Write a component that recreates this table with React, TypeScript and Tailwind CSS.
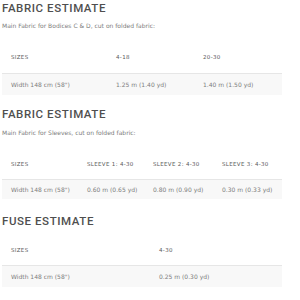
import React from "react";

interface EstimateTableProps {
  columns: { label: string; width: string }[];
  values: string[];
  headHeight: string;
  rowHeight: string;
}

const EstimateTable: React.FC<EstimateTableProps> = ({ columns, values, headHeight, rowHeight }) => {
  return (
    <table className="w-[280px] border-collapse table-fixed">
      <thead>
        <tr className={`${headHeight} border-b border-[#e6e6e6]`}>
          {columns.map((col) => (
            <th
              key={col.label}
              className={`${col.width} pl-[9px] text-left align-middle text-[5.5px] font-normal tracking-[0.06em] text-[#5a5a5a]`}
            >
              {col.label}
            </th>
          ))}
        </tr>
      </thead>
      <tbody>
        <tr className={`${rowHeight} bg-[#f8f8f8]`}>
          {values.map((value, i) => (
            <td key={i} className="pl-[9px] align-middle text-[6px] text-[#7d7d7d]">
              {value}
            </td>
          ))}
        </tr>
      </tbody>
    </table>
  );
};

const headingClass =
  "h-[16px] leading-[16px] text-[11.5px] font-medium tracking-[0.05em] text-[#4f4f4f] font-['Roboto',sans-serif]";

const App: React.FC = () => {
  return (
    <div className="w-[300px] h-[300px] bg-white pl-[2px] font-['DejaVu_Sans',sans-serif] overflow-hidden">
      <h2 className={headingClass}>FABRIC ESTIMATE</h2>
      <p className="mt-[6px] h-[8px] leading-[8px] text-[6px] text-[#7d7d7d]">
        Main Fabric for Bodices C &amp; D, cut on folded fabric:
      </p>
      <div className="mt-[11px]">
        <EstimateTable
          headHeight="h-[32px]"
          rowHeight="h-[22px]"
          columns={[
            { label: "SIZES", width: "w-[105px]" },
            { label: "4-18", width: "w-[87px]" },
            { label: "20-30", width: "w-[88px]" },
          ]}
          values={["Width 148 cm (58\")", "1.25 m (1.40 yd)", "1.40 m (1.50 yd)"]}
        />
      </div>

      <h2 className={`mt-[11px] ${headingClass}`}>FABRIC ESTIMATE</h2>
      <p className="mt-[7px] h-[8px] leading-[8px] text-[6px] text-[#7d7d7d]">
        Main Fabric for Sleeves, cut on folded fabric:
      </p>
      <div className="mt-[12px]">
        <EstimateTable
          headHeight="h-[30px]"
          rowHeight="h-[20px]"
          columns={[
            { label: "SIZES", width: "w-[76px]" },
            { label: "SLEEVE 1: 4-30", width: "w-[66px]" },
            { label: "SLEEVE 2: 4-30", width: "w-[69px]" },
            { label: "SLEEVE 3: 4-30", width: "w-[69px]" },
          ]}
          values={["Width 148 cm (58\")", "0.60 m (0.65 yd)", "0.80 m (0.90 yd)", "0.30 m (0.33 yd)"]}
        />
      </div>

      <h2 className={`mt-[14px] ${headingClass}`}>FUSE ESTIMATE</h2>
      <div className="mt-[6px]">
        <EstimateTable
          headHeight="h-[30px]"
          rowHeight="h-[22px]"
          columns={[
            { label: "SIZES", width: "w-[148px]" },
            { label: "4-30", width: "w-[132px]" },
          ]}
          values={["Width 148 cm (58\")", "0.25 m (0.30 yd)"]}
        />
      </div>
    </div>
  );
};

export default App;
